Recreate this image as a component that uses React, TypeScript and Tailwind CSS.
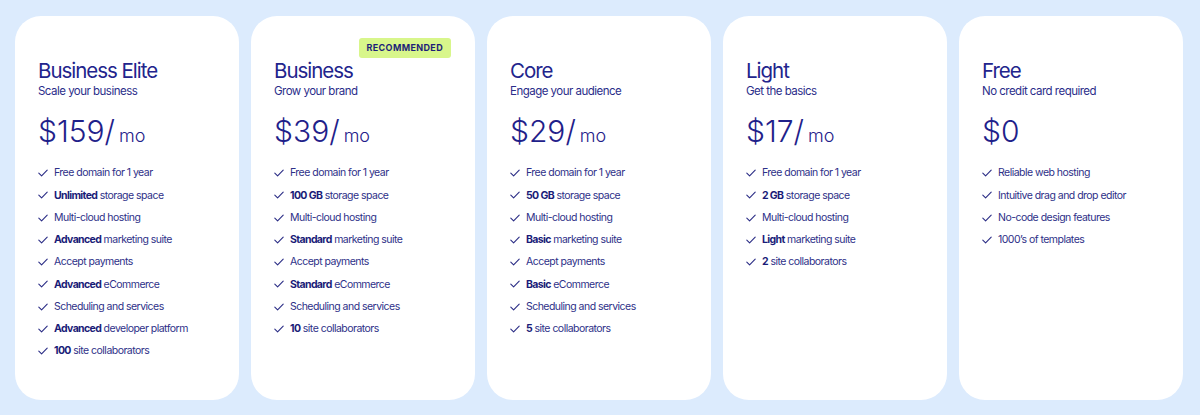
import React from "react";

type Feature = { b?: string; t: string };
type Plan = {
  name: string;
  sub: string;
  price: string;
  mo: boolean;
  badge?: boolean;
  features: Feature[];
};

const plans: Plan[] = [
  {
    name: "Business Elite",
    sub: "Scale your business",
    price: "$159/",
    mo: true,
    features: [
      { t: "Free domain for 1 year" },
      { b: "Unlimited", t: " storage space" },
      { t: "Multi-cloud hosting" },
      { b: "Advanced", t: " marketing suite" },
      { t: "Accept payments" },
      { b: "Advanced", t: " eCommerce" },
      { t: "Scheduling and services" },
      { b: "Advanced", t: " developer platform" },
      { b: "100", t: " site collaborators" },
    ],
  },
  {
    name: "Business",
    sub: "Grow your brand",
    price: "$39/",
    mo: true,
    badge: true,
    features: [
      { t: "Free domain for 1 year" },
      { b: "100 GB", t: " storage space" },
      { t: "Multi-cloud hosting" },
      { b: "Standard", t: " marketing suite" },
      { t: "Accept payments" },
      { b: "Standard", t: " eCommerce" },
      { t: "Scheduling and services" },
      { b: "10", t: " site collaborators" },
    ],
  },
  {
    name: "Core",
    sub: "Engage your audience",
    price: "$29/",
    mo: true,
    features: [
      { t: "Free domain for 1 year" },
      { b: "50 GB", t: " storage space" },
      { t: "Multi-cloud hosting" },
      { b: "Basic", t: " marketing suite" },
      { t: "Accept payments" },
      { b: "Basic", t: " eCommerce" },
      { t: "Scheduling and services" },
      { b: "5", t: " site collaborators" },
    ],
  },
  {
    name: "Light",
    sub: "Get the basics",
    price: "$17/",
    mo: true,
    features: [
      { t: "Free domain for 1 year" },
      { b: "2 GB", t: " storage space" },
      { t: "Multi-cloud hosting" },
      { b: "Light", t: " marketing suite" },
      { b: "2", t: " site collaborators" },
    ],
  },
  {
    name: "Free",
    sub: "No credit card required",
    price: "$0",
    mo: false,
    features: [
      { t: "Reliable web hosting" },
      { t: "Intuitive drag and drop editor" },
      { t: "No-code design features" },
      { t: "1000\u2019s of templates" },
    ],
  },
];

function Check() {
  return (
    <svg width="10" height="8" viewBox="0 0 10 8" fill="none" className="shrink-0">
      <path
        d="M0.8 4.2 L3.6 6.8 L9.2 1.2"
        stroke="#2a2c85"
        strokeWidth="1.1"
        strokeLinecap="round"
        strokeLinejoin="round"
      />
    </svg>
  );
}

function Card({ p }: { p: Plan }) {
  return (
    <div className="relative w-[224px] h-[384px] shrink-0 rounded-[26px] bg-white pl-[23px] pr-4 pt-[43px]">
      {p.badge && (
        <div className="absolute top-[22px] right-[24px] h-[20px] px-[8px] flex items-center rounded-[3px] bg-[#d8f68b] text-[9px] font-bold tracking-[0.04em] text-[#1d1f78]">
          RECOMMENDED
        </div>
      )}
      <div className="text-[20.5px] leading-[24px] text-[#22248c] tracking-[-0.05em]">{p.name}</div>
      <div className="text-[11.5px] leading-[16px] text-[#2b2d8a] tracking-[-0.045em]">{p.sub}</div>
      <div className="mt-[15px] flex items-baseline h-[34px] text-[#1f218a]">
        <span className="text-[30px] leading-[34px] font-light">{p.price}</span>
        {p.mo && <span className="ml-[4px] text-[18px] leading-[34px] font-light">mo</span>}
      </div>
      <ul className="mt-[14px] flex flex-col">
        {p.features.map((f, i) => (
          <li key={i} className="flex items-center h-[22.25px] text-[10.5px] text-[#2e3088] tracking-[-0.05em]">
            <Check />
            <span className="ml-[6px] whitespace-nowrap">
              {f.b && <span className="font-bold tracking-[-0.06em] text-[#1a1c78]">{f.b}</span>}
              {f.t}
            </span>
          </li>
        ))}
      </ul>
    </div>
  );
}

export default function App() {
  return (
    <div
      className="w-[1200px] h-[415px] bg-[#dcebfd] pt-[16px] px-[15px] flex gap-3"
      style={{ fontFamily: "Inter, 'Noto Sans', sans-serif" }}
    >
      {plans.map((p) => (
        <Card key={p.name} p={p} />
      ))}
    </div>
  );
}
